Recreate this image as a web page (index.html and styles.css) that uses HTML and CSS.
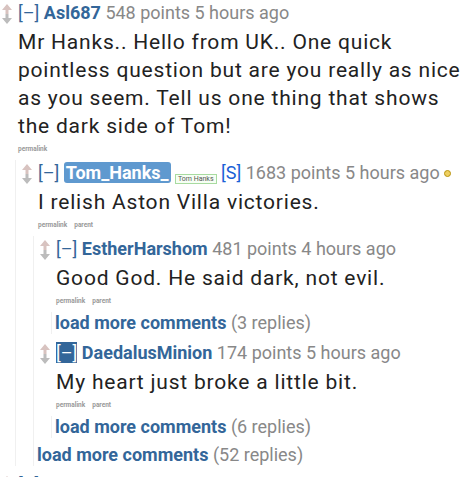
FILE: index.html
```html
<!DOCTYPE html>
<html lang="en">
<head>
    <meta charset="UTF-8">
    <title>Comments</title>
    <link rel="stylesheet" href="styles.css">
</head>
<body>
    <svg class="defs" width="0" height="0">
        <symbol id="vote" viewBox="0 0 10 20">
            <polygon points="5,0 10,6 6.5,6 6.5,10 3.5,10 3.5,6 0,6" fill="#d8c3c0"/>
            <polygon points="3.5,10 6.5,10 6.5,14 10,14 5,20 0,14 3.5,14" fill="#bcbcbc"/>
        </symbol>
    </svg>

    <div class="sitetable top">
        <div class="comment">
            <div class="row">
                <div class="midcol"><svg width="10" height="20"><use href="#vote"/></svg></div>
                <div class="entry">
                    <p class="tagline"><a class="expand">[–]</a> <a class="author">Asl687</a> <span class="score">548 points 5 hours ago</span></p>
                    <div class="md">Mr Hanks.. Hello from UK.. One quick pointless question but are you really as nice as you seem. Tell us one thing that shows the dark side of Tom!</div>
                    <ul class="buttons"><li>permalink</li></ul>
                </div>
            </div>
            <div class="child">
                <div class="comment">
                    <div class="row">
                        <div class="midcol"><svg width="10" height="20"><use href="#vote"/></svg></div>
                        <div class="entry">
                            <p class="tagline"><a class="expand">[–]</a> <a class="author submitter">Tom_Hanks_</a> <span class="flair">Tom Hanks</span> <a class="op">[S]</a> <span class="score">1683 points 5 hours ago</span> <span class="gilded"></span></p>
                            <div class="md">I relish Aston Villa victories.</div>
                            <ul class="buttons"><li>permalink</li><li>parent</li></ul>
                        </div>
                    </div>
                    <div class="child">
                        <div class="comment">
                            <div class="row">
                                <div class="midcol"><svg width="10" height="20"><use href="#vote"/></svg></div>
                                <div class="entry">
                                    <p class="tagline"><a class="expand">[–]</a> <a class="author">EstherHarshom</a> <span class="score">481 points 4 hours ago</span></p>
                                    <div class="md">Good God. He said dark, not evil.</div>
                                    <ul class="buttons"><li>permalink</li><li>parent</li></ul>
                                </div>
                            </div>
                            <div class="child">
                                <div class="morechildren"><a>load more comments</a> <span class="gray">(3 replies)</span></div>
                            </div>
                        </div>
                        <div class="comment">
                            <div class="row">
                                <div class="midcol"><svg width="10" height="20"><use href="#vote"/></svg></div>
                                <div class="entry">
                                    <p class="tagline"><a class="expand active">[–]</a> <a class="author">DaedalusMinion</a> <span class="score">174 points 5 hours ago</span></p>
                                    <div class="md">My heart just broke a little bit.</div>
                                    <ul class="buttons"><li>permalink</li><li>parent</li></ul>
                                </div>
                            </div>
                            <div class="child">
                                <div class="morechildren"><a>load more comments</a> <span class="gray">(6 replies)</span></div>
                            </div>
                        </div>
                        <div class="morechildren"><a>load more comments</a> <span class="gray">(52 replies)</span></div>
                    </div>
                </div>
            </div>
        </div>
        <div class="comment">
            <div class="row">
                <div class="midcol"><svg width="10" height="20"><use href="#vote"/></svg></div>
                <div class="entry">
                    <p class="tagline"><a class="expand">[–]</a> <a class="author">kittenmittens</a> <span class="score">2071 points 5 hours ago</span></p>
                </div>
            </div>
        </div>
    </div>
</body>
</html>
```

FILE: styles.css
```css
body {
    margin: 0;
    background: #fff;
    color: #222;
    font-family: Roboto, 'Liberation Sans', sans-serif;
    overflow: hidden;
}
.defs {
    position: absolute;
}
a {
    color: #369;
    text-decoration: none;
}
.comment {
    padding-left: 6px;
    padding-top: 2px;
}
.top > .comment {
    padding-left: 2px;
}
.row {
    display: flex;
}
.midcol {
    width: 10px;
    flex: none;
    padding-top: 2px;
}
.midcol svg {
    display: block;
}
.entry {
    margin-left: 6px;
    min-width: 0;
}
.tagline {
    margin: 0;
    font-size: 18px;
    line-height: 22px;
    white-space: nowrap;
    color: #888;
}
.author {
    font-weight: bold;
}
.submitter {
    background: #5f99cf;
    color: #fff;
    padding: 0 2px;
    border-radius: 3px;
}
.expand.active {
    background: #336699;
    color: #fff;
}
.flair {
    display: inline-block;
    font-size: 7px;
    line-height: 8px;
    padding: 0 2px;
    border: 1px solid #a8dba0;
    background: #f6fff4;
    color: #555;
    vertical-align: -2px;
}
.op {
    color: #1a5fd6;
}
.score {
    color: #888;
}
.gilded {
    display: inline-block;
    width: 5px;
    height: 5px;
    border-radius: 50%;
    border: 1.5px solid #b8930f;
    background: #efd060;
    vertical-align: 2px;
}
.md {
    font-size: 21px;
    letter-spacing: 0.8px;
    line-height: 28px;
    margin-top: 4px;
}
.buttons {
    list-style: none;
    margin: 4px 0 6px;
    padding: 0;
    display: flex;
    gap: 7px;
    font-size: 6.5px;
    line-height: 10px;
    font-weight: bold;
    color: #999;
}
.child {
    margin-left: 11px;
    border-left: 1px solid #f0f0f0;
}
.top > .comment > .child {
    margin-left: 13px;
}
.morechildren {
    padding-left: 3px;
    font-size: 18px;
    line-height: 22px;
    margin-bottom: 6px;
    white-space: nowrap;
}
.morechildren a {
    font-weight: bold;
}
.gray {
    color: #888;
}
```
